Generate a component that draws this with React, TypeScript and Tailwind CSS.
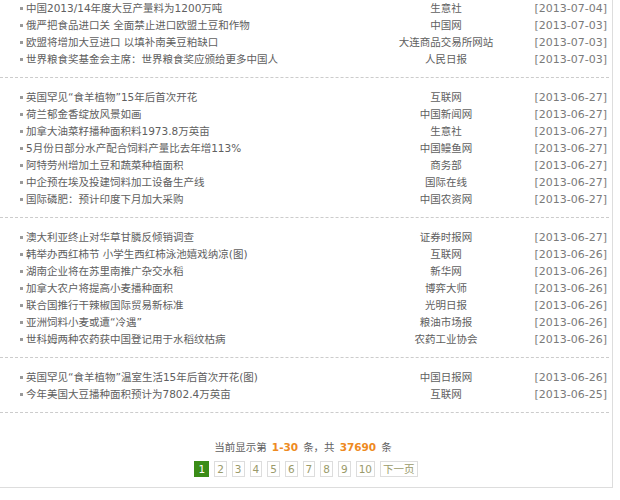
import React from "react";

type Row = [string, string, string];

const groups: Row[][] = [
  [
    ["中国2013/14年度大豆产量料为1200万吨", "生意社", "[2013-07-04]"],
    ["俄严把食品进口关 全面禁止进口欧盟土豆和作物", "中国网", "[2013-07-03]"],
    ["欧盟将增加大豆进口 以填补南美豆粕缺口", "大连商品交易所网站", "[2013-07-03]"],
    ["世界粮食奖基金会主席：世界粮食奖应颁给更多中国人", "人民日报", "[2013-07-03]"],
  ],
  [
    ["英国罕见“食羊植物”15年后首次开花", "互联网", "[2013-06-27]"],
    ["荷兰郁金香绽放风景如画", "中国新闻网", "[2013-06-27]"],
    ["加拿大油菜籽播种面积料1973.8万英亩", "生意社", "[2013-06-27]"],
    ["5月份日部分水产配合饲料产量比去年增113%", "中国鳗鱼网", "[2013-06-27]"],
    ["阿特劳州增加土豆和蔬菜种植面积", "商务部", "[2013-06-27]"],
    ["中企预在埃及投建饲料加工设备生产线", "国际在线", "[2013-06-27]"],
    ["国际磷肥：预计印度下月加大采购", "中国农资网", "[2013-06-27]"],
  ],
  [
    ["澳大利亚终止对华草甘膦反倾销调查", "证券时报网", "[2013-06-27]"],
    ["韩举办西红柿节 小学生西红柿泳池嬉戏纳凉(图)", "互联网", "[2013-06-26]"],
    ["湖南企业将在苏里南推广杂交水稻", "新华网", "[2013-06-26]"],
    ["加拿大农户将提高小麦播种面积", "博弈大师", "[2013-06-26]"],
    ["联合国推行干辣椒国际贸易新标准", "光明日报", "[2013-06-26]"],
    ["亚洲饲料小麦或遭“冷遇”", "粮油市场报", "[2013-06-26]"],
    ["世科姆两种农药获中国登记用于水稻纹枯病", "农药工业协会", "[2013-06-26]"],
  ],
  [
    ["英国罕见“食羊植物”温室生活15年后首次开花(图)", "中国日报网", "[2013-06-26]"],
    ["今年美国大豆播种面积预计为7802.4万英亩", "互联网", "[2013-06-25]"],
  ],
];

const pages = ["2", "3", "4", "5", "6", "7", "8", "9", "10", "下一页"];

export default function App() {
  return (
    <div
      className="w-[613px] bg-white border-r border-b border-[#dddddd] text-[10.5px] text-[#606060]"
      style={{ fontFamily: '"DejaVu Sans", "Noto Sans CJK SC", sans-serif' }}
    >
      {groups.map((g, gi) => (
        <ul
          key={gi}
          className={
            gi === 0
              ? "pb-[9px] border-b border-dashed border-[#cccccc] mr-[3px]"
              : "pt-[11px] pb-[9px] border-b border-dashed border-[#cccccc] mr-[3px]"
          }
        >
          {g.map((r, ri) => (
            <li key={ri} className="flex items-center h-[17px] leading-[17px]">
              <div className="flex-1 flex items-center pl-[20px] min-w-0">
                <span className="w-[3px] h-[3px] bg-[#999999] mr-[3px] shrink-0" />
                <span className="whitespace-nowrap">{r[0]}</span>
              </div>
              <div className="w-[150px] text-center whitespace-nowrap">{r[1]}</div>
              <div className="w-[88px] text-right pr-[2px] text-[11px] text-[#7a7a7a] whitespace-nowrap">
                {r[2]}
              </div>
            </li>
          ))}
        </ul>
      ))}
      <div className="pt-[26px] pb-[10px] flex flex-col items-center">
        <div className="h-[17px] leading-[17px] whitespace-nowrap pr-[6px]">
          当前显示第<span className="px-[5px] font-bold text-[#ee8a22]">1-30</span>条，共
          <span className="px-[5px] font-bold text-[#ee8a22]">37690</span>条
        </div>
        <div className="mt-[5px] flex gap-[5px]">
          <span className="h-[16px] leading-[14px] px-[3px] border border-[#3a8c17] bg-[#3a8c17] text-white">
            1
          </span>
          {pages.map((p) => (
            <span
              key={p}
              className="h-[16px] leading-[14px] px-[2px] border border-[#dddddd] text-[#9a9a6a]"
            >
              {p}
            </span>
          ))}
        </div>
      </div>
    </div>
  );
}
